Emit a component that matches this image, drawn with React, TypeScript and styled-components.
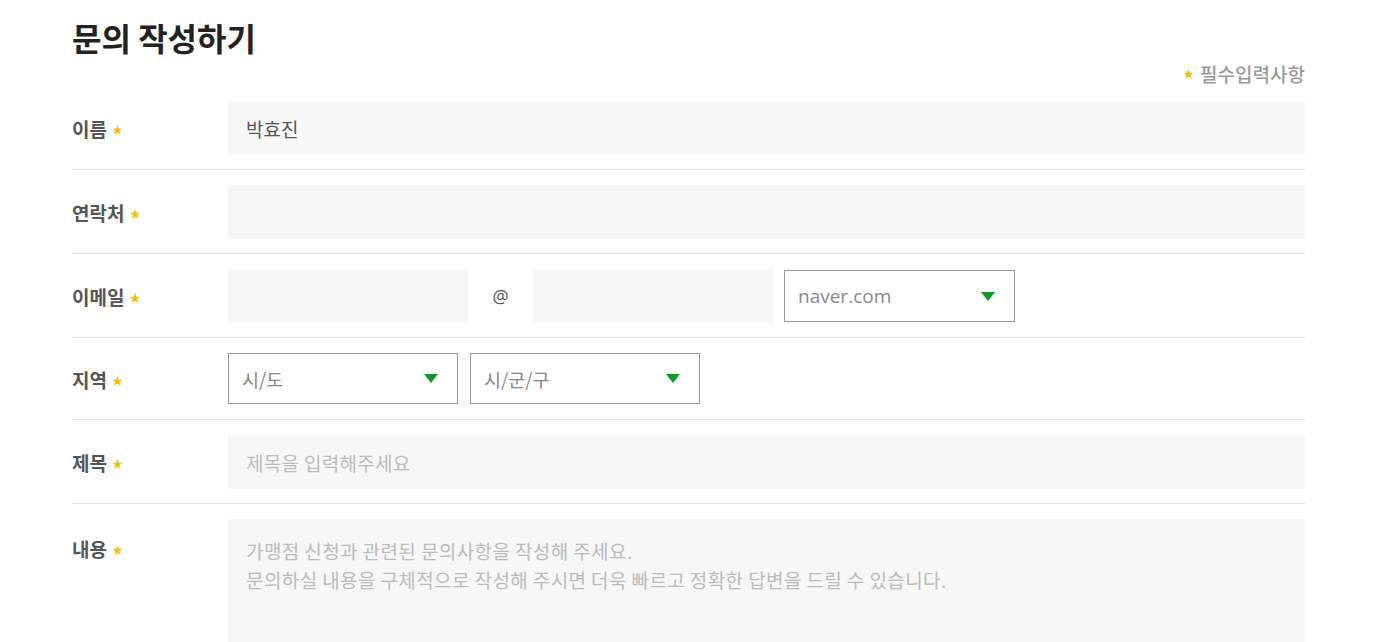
import React from "react";
import styled, { createGlobalStyle } from "styled-components";

const Global = createGlobalStyle`
  html, body { margin: 0; padding: 0; background: #fff; }
  body { font-family: "Noto Sans CJK KR", "Noto Sans", sans-serif; color: #333; }
  * { box-sizing: border-box; }
`;

const Page = styled.div`
  width: 1233px;
  margin-left: 72px;
`;

const Title = styled.h2`
  margin: 14px 0 0;
  font-size: 32px;
  line-height: 46px;
  font-weight: 700;
  color: #222;
`;

const Note = styled.p`
  margin: 0;
  height: 26px;
  display: flex;
  align-items: center;
  justify-content: flex-end;
  font-size: 19px;
  font-weight: 500;
  color: #999;
`;

const Star = styled.span<{ $note?: boolean }>`
  color: #f5c000;
  font-size: 11px;
  line-height: 1;
  margin: ${(p) => (p.$note ? "0 6px 0 0" : "2px 0 0 5px")};
`;

const Row = styled.div<{ $last?: boolean }>`
  display: flex;
  align-items: flex-start;
  padding: 15px 0 14px;
  border-bottom: ${(p) => (p.$last ? "none" : "1px solid #e5e5e5")};
`;

const Label = styled.div<{ $h?: number }>`
  width: 156px;
  flex: none;
  height: ${(p) => p.$h ?? 54}px;
  display: flex;
  align-items: center;
  font-size: 19px;
  font-weight: 700;
  color: #555;
`;

const Field = styled.div<{ $h?: number }>`
  flex: 1;
  display: flex;
  align-items: flex-start;
  ${(p) => (p.$h ? `height: ${p.$h}px;` : "")}
`;

const TextInput = styled.input<{ $w?: number }>`
  width: ${(p) => (p.$w ? `${p.$w}px` : "100%")};
  height: 54px;
  border: none;
  outline: none;
  background: #f7f7f7;
  padding: 0 18px;
  font-family: inherit;
  font-size: 19px;
  color: #555;
  &::placeholder { color: #bbb; letter-spacing: 0.3px; }
`;

const At = styled.span`
  width: 65px;
  height: 54px;
  display: flex;
  align-items: center;
  justify-content: center;
  font-family: "Open Sans", "Noto Sans", sans-serif;
  font-size: 18px;
  color: #555;
`;

const SelectBox = styled.div<{ $w: number; $h: number; $ml?: number; $mt?: number }>`
  width: ${(p) => p.$w}px;
  height: ${(p) => p.$h}px;
  margin-left: ${(p) => p.$ml ?? 0}px;
  margin-top: ${(p) => p.$mt ?? 0}px;
  border: 1px solid #999;
  background: #fff;
  display: flex;
  align-items: center;
  justify-content: space-between;
  padding: 0 19px 0 13px;
  font-size: 19px;
  color: #888;
`;

const SelectText = styled.span<{ $latin?: boolean }>`
  font-family: ${(p) => (p.$latin ? `"Open Sans", "Noto Sans", sans-serif` : "inherit")};
  font-size: ${(p) => (p.$latin ? "19px" : "18.5px")};
`;

const Arrow = () => (
  <svg width="14" height="9" viewBox="0 0 14 9">
    <polygon points="0,0 14,0 7,9" fill="#0e9a2a" />
  </svg>
);

const TextArea = styled.textarea`
  width: 100%;
  height: 140px;
  border: none;
  outline: none;
  resize: none;
  background: #f7f7f7;
  padding: 17px 18px;
  font-family: inherit;
  font-size: 19px;
  line-height: 29px;
  color: #555;
  &::placeholder { color: #bbb; letter-spacing: 0.4px; }
`;

export default function App() {
  return (
    <>
      <Global />
      <Page>
        <Title>문의 작성하기</Title>
        <Note>
          <Star $note>★</Star>필수입력사항
        </Note>
        <Row>
          <Label>이름<Star>★</Star></Label>
          <Field><TextInput defaultValue="박효진" /></Field>
        </Row>
        <Row>
          <Label>연락처<Star>★</Star></Label>
          <Field><TextInput /></Field>
        </Row>
        <Row>
          <Label>이메일<Star>★</Star></Label>
          <Field>
            <TextInput $w={240} />
            <At>@</At>
            <TextInput $w={240} />
            <SelectBox $w={231} $h={52} $ml={11} $mt={1}>
              <SelectText $latin>naver.com</SelectText>
              <Arrow />
            </SelectBox>
          </Field>
        </Row>
        <Row>
          <Label $h={52}>지역<Star>★</Star></Label>
          <Field $h={52}>
            <SelectBox $w={230} $h={51}>
              <SelectText>시/도</SelectText>
              <Arrow />
            </SelectBox>
            <SelectBox $w={230} $h={51} $ml={12}>
              <SelectText>시/군/구</SelectText>
              <Arrow />
            </SelectBox>
          </Field>
        </Row>
        <Row>
          <Label>제목<Star>★</Star></Label>
          <Field><TextInput placeholder="제목을 입력해주세요" /></Field>
        </Row>
        <Row $last>
          <Label $h={58}>내용<Star>★</Star></Label>
          <Field>
            <TextArea placeholder={"가맹점 신청과 관련된 문의사항을 작성해 주세요.\n문의하실 내용을 구체적으로 작성해 주시면 더욱 빠르고 정확한 답변을 드릴 수 있습니다."} />
          </Field>
        </Row>
      </Page>
    </>
  );
}
